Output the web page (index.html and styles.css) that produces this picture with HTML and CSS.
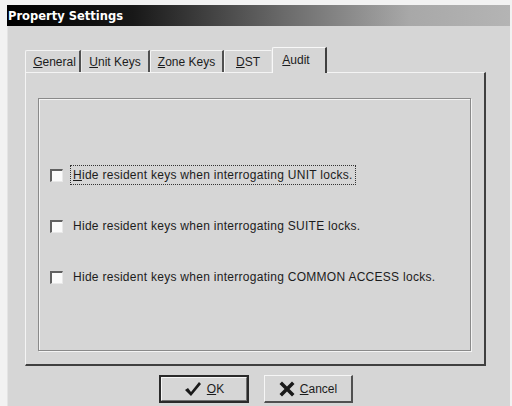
FILE: index.html
```html
<!DOCTYPE html>
<html>
<head>
<meta charset="utf-8">
<link rel="stylesheet" href="styles.css">
</head>
<body>
<div class="window">
  <div class="titlebar"><span class="title">Property Settings</span></div>
  <div class="client">
    <div class="tabs">
      <div class="tab t-general"><u>G</u>eneral</div>
      <div class="tab t-unit"><u>U</u>nit Keys</div>
      <div class="tab t-zone"><u>Z</u>one Keys</div>
      <div class="tab t-dst"><u>D</u>ST</div>
      <div class="tab t-audit selected"><u>A</u>udit</div>
    </div>
    <div class="panel">
      <div class="group">
        <div class="row">
          <span class="check"></span>
          <span class="label focus"><u>H</u>ide resident keys when interrogating UNIT locks.</span>
        </div>
        <div class="row">
          <span class="check"></span>
          <span class="label">Hide resident keys when interrogating SUITE locks.</span>
        </div>
        <div class="row">
          <span class="check"></span>
          <span class="label">Hide resident keys when interrogating COMMON ACCESS locks.</span>
        </div>
      </div>
    </div>
    <div class="buttons">
      <div class="btn default">
        <div class="btn-inner">
          <svg class="icon" width="18" height="16" viewBox="0 0 18 16"><path d="M1 9 L4 7 L7 11 L15 1 L17 3 L7 15 Z" fill="#1a1a1a"/></svg>
          <span class="btn-text"><u>O</u>K</span>
        </div>
      </div>
      <div class="btn">
        <div class="btn-inner">
          <svg class="icon" width="16" height="16" viewBox="0 0 16 16"><path d="M0.5 3 L3 0.5 L8 5.5 L13 0.5 L15.5 3 L10.5 8 L15.5 13 L13 15.5 L8 10.5 L3 15.5 L0.5 13 L5.5 8 Z" fill="#1a1a1a"/></svg>
          <span class="btn-text"><u>C</u>ancel</span>
        </div>
      </div>
    </div>
  </div>
</div>
</body>
</html>
```
FILE: styles.css
```css
html, body {
  margin: 0;
  padding: 0;
  background: #f2f2f2;
  width: 512px;
  height: 406px;
  overflow: hidden;
}
.window {
  margin: 5px 2px 0 7px;
  height: 401px;
  display: flex;
  flex-direction: column;
  font-family: "Liberation Sans", Arial, sans-serif;
  color: #1c1c1c;
}
.titlebar {
  height: 21px;
  background: linear-gradient(to right, #000 0%, #181818 25%, #6a6a6a 55%, #a8a8a8 80%, #b4b4b4 100%);
  display: flex;
  align-items: center;
}
.title {
  font-family: "DejaVu Sans", sans-serif;
  font-weight: bold;
  font-size: 11.5px;
  color: #fff;
  padding-left: 1px;
}
.client {
  flex: 1;
  background: #d6d6d6;
  border-left: 1px solid #e4e4e4;
  padding: 21px 23px 0 17px;
  display: flex;
  flex-direction: column;
}
.tabs {
  display: flex;
  align-items: flex-end;
  height: 25px;
  position: relative;
  z-index: 2;
}
.tab {
  box-sizing: border-box;
  height: 22px;
  font-size: 12px;
  display: flex;
  align-items: center;
  justify-content: center;
  border-top: 1px solid #f4f4f4;
  border-left: 1px solid #f4f4f4;
  border-right: 2px solid #505050;
  border-top-left-radius: 2px;
  background: #d6d6d6;
  padding-top: 1px;
}
.t-general { width: 56px; padding-left: 4px; }
.t-unit { width: 69px; border-left-color: #e8e8e8; }
.t-zone { width: 74px; }
.t-dst { width: 48px; border-right: 1px solid #e0e0e0; }
.t-audit { width: 55px; }
.tab.selected {
  height: 26px;
  margin-bottom: -1px;
  border-top: 1px solid #f8f8f8;
  border-left: 1px solid #f8f8f8;
  border-right: 2px solid #404040;
  padding-bottom: 3px;
  padding-right: 6px;
}
.panel {
  box-sizing: border-box;
  width: 461px;
  height: 294px;
  background: #d6d6d6;
  border-top: 1px solid #f4f4f4;
  border-left: 1px solid #f4f4f4;
  border-right: 2px solid #404040;
  border-bottom: 2px solid #404040;
  padding: 25px 13px 13px 12px;
  display: flex;
}
.group {
  flex: 1;
  border: 1px solid #8a8a8a;
  box-shadow: inset 1px 1px 0 #f4f4f4, 1px 1px 0 #f4f4f4;
  display: flex;
  flex-direction: column;
  padding-top: 66px;
  gap: 31px;
}
.row {
  display: flex;
  align-items: center;
  height: 20px;
  padding-left: 11px;
}
.check {
  box-sizing: border-box;
  width: 13px;
  height: 13px;
  background: #fafafa;
  border-top: 2px solid #606060;
  border-left: 2px solid #606060;
  border-right: 1px solid #e8e8e8;
  border-bottom: 1px solid #e8e8e8;
}
.label {
  font-size: 12px;
  letter-spacing: 0.28px;
  margin-left: 7px;
  padding: 2px 2px;
  white-space: nowrap;
  border: 1px solid transparent;
}
.label.focus {
  border: 1px dotted #333;
}
.buttons {
  display: flex;
  justify-content: center;
  gap: 15px;
  margin-top: 9px;
}
.btn {
  box-sizing: border-box;
  width: 89px;
  height: 28px;
  background: #d6d6d6;
  border-top: 1px solid #f6f6f6;
  border-left: 1px solid #f6f6f6;
  border-right: 2px solid #505050;
  border-bottom: 2px solid #505050;
  display: flex;
}
.btn.default {
  width: 90px;
  border: 2px solid #2a2a2a;
}
.btn-inner {
  flex: 1;
  display: flex;
  align-items: center;
  justify-content: center;
  gap: 5px;
}
.btn.default .btn-inner {
  border-top: 1px solid #f6f6f6;
  border-left: 1px solid #f6f6f6;
  border-right: 1px solid #707070;
  border-bottom: 1px solid #707070;
}
.icon { display: block; }
.btn-text {
  font-size: 12px;
}
```
